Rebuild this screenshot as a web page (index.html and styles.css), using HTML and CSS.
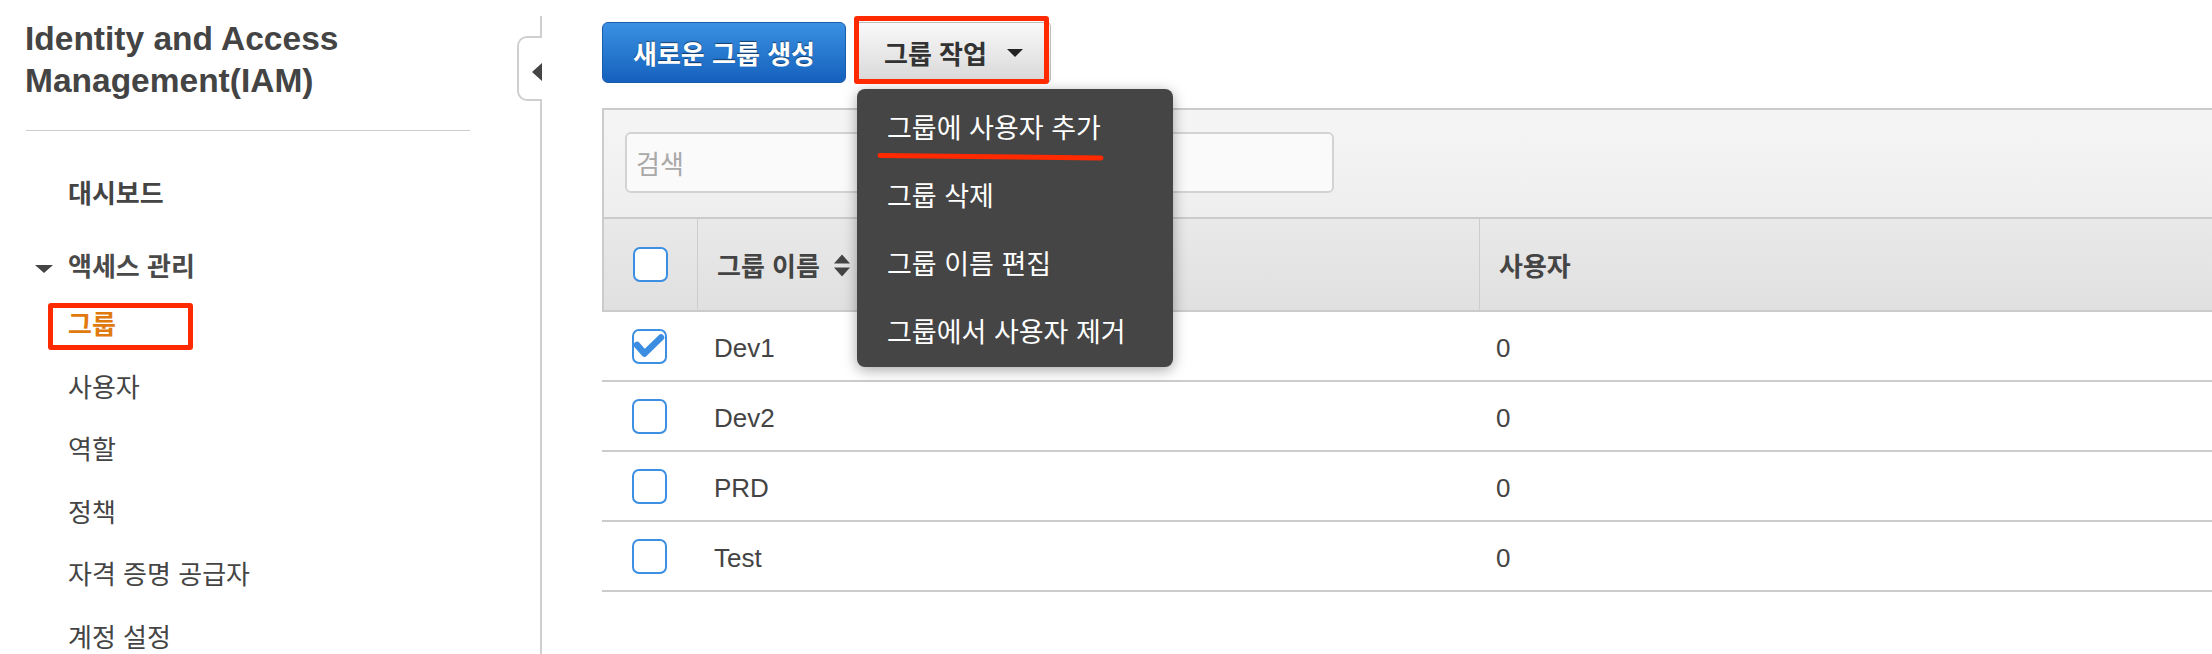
FILE: index.html
```html
<!DOCTYPE html>
<html lang="ko">
<head>
<meta charset="utf-8">
<title>IAM 그룹</title>
<link rel="stylesheet" href="styles.css">
</head>
<body>
<div class="page">
  <aside class="sidebar">
    <h1 class="title">Identity and Access Management(IAM)</h1>
    <hr class="rule">
    <ul class="nav">
      <li class="nav-top">대시보드</li>
      <li class="nav-section"><span class="caret-down"></span>액세스 관리</li>
      <li class="nav-sub active"><span class="mark-box mark-nav"></span>그룹</li>
      <li class="nav-sub">사용자</li>
      <li class="nav-sub">역할</li>
      <li class="nav-sub">정책</li>
      <li class="nav-sub">자격 증명 공급자</li>
      <li class="nav-sub">계정 설정</li>
    </ul>
    <div class="collapse-tab"><span class="tri-left"></span></div>
  </aside>

  <main class="main">
    <div class="toolbar">
      <button class="btn btn-primary">새로운 그룹 생성</button>
      <div class="actions">
        <button class="btn btn-default">그룹 작업<span class="caret"></span></button>
        <span class="mark-box mark-actions"></span>
        <ul class="menu">
          <li>그룹에 사용자 추가
            <svg class="underline" width="230" height="12" viewBox="0 0 230 12"><path d="M4 4.5 Q 110 5.5 225 7" fill="none" stroke="#ff2a00" stroke-width="5" stroke-linecap="round"/></svg>
          </li>
          <li>그룹 삭제</li>
          <li>그룹 이름 편집</li>
          <li>그룹에서 사용자 제거</li>
        </ul>
      </div>
    </div>

    <div class="panel">
      <div class="search-row">
        <input class="search" type="text" placeholder="검색">
      </div>
      <div class="grid-header">
        <div class="cell cb-cell"><span class="checkbox"></span></div>
        <div class="cell hcell">그룹 이름
          <svg class="sort" width="16" height="23" viewBox="0 0 16 23"><polygon points="0,9.5 8,0.5 16,9.5" fill="#444"/><polygon points="0,13.5 16,13.5 8,22.5" fill="#444"/></svg>
        </div>
        <div class="cell hcell">사용자</div>
      </div>
      <div class="row">
        <div class="cell cb-cell"><span class="checkbox checked"><svg width="31" height="31" viewBox="0 0 31 31"><polyline points="3,14 10.5,22.5 27,6.5" fill="none" stroke="#3a8de0" stroke-width="6.5" stroke-linecap="round" stroke-linejoin="round"/></svg></span></div>
        <div class="cell tcell">Dev1</div>
        <div class="cell tcell">0</div>
      </div>
      <div class="row">
        <div class="cell cb-cell"><span class="checkbox"></span></div>
        <div class="cell tcell">Dev2</div>
        <div class="cell tcell">0</div>
      </div>
      <div class="row">
        <div class="cell cb-cell"><span class="checkbox"></span></div>
        <div class="cell tcell">PRD</div>
        <div class="cell tcell">0</div>
      </div>
      <div class="row">
        <div class="cell cb-cell"><span class="checkbox"></span></div>
        <div class="cell tcell">Test</div>
        <div class="cell tcell">0</div>
      </div>
    </div>
  </main>
</div>
</body>
</html>
```
FILE: styles.css
```css
html, body {
  margin: 0;
  padding: 0;
  background: #fff;
}
body {
  font-family: "Noto Sans CJK KR", sans-serif;
  color: #444;
}
.page {
  display: flex;
  height: 654px;
  overflow: hidden;
}

/* ---------- sidebar ---------- */
.sidebar {
  position: relative;
  flex: 0 0 542px;
  box-sizing: border-box;
  margin-top: 16px;
  padding-left: 25px;
  border-right: 2px solid #cfcfcf;
}
.title {
  font-family: "Liberation Sans", Arial, sans-serif;
  font-weight: 700;
  font-size: 33.5px;
  line-height: 42px;
  color: #444;
  margin: 2px 0 0;
  width: 420px;
}
.rule {
  border: 0;
  height: 1px;
  background: #cccccc;
  width: 444px;
  margin: 28px 0 0 1px;
}
.nav {
  list-style: none;
  margin: 30px 0 0;
  padding: 0;
  font-size: 26px;
}
.nav li {
  padding-left: 43px;
  white-space: nowrap;
}
.nav-top {
  line-height: 62px;
  font-weight: 700;
  margin-bottom: 15px;
}
.nav-section {
  line-height: 54px;
  font-weight: 700;
  color: #4a4a4a;
}
.nav-sub {
  position: relative;
  line-height: 62.5px;
}
.nav-sub.active {
  color: #e07a0e;
  font-weight: 700;
}
.caret-down {
  display: inline-block;
  width: 0;
  height: 0;
  border-left: 9px solid transparent;
  border-right: 9px solid transparent;
  border-top: 8px solid #444;
  margin-left: -33px;
  margin-right: 15px;
  vertical-align: middle;
}
.collapse-tab {
  position: absolute;
  top: 20px;
  right: -2px;
  width: 25px;
  height: 65px;
  box-sizing: border-box;
  border: 2px solid #cfcfcf;
  border-right: 0;
  border-radius: 10px 0 0 10px;
  background: #fff;
  display: flex;
  justify-content: flex-end;
  align-items: center;
  padding-top: 7px;
}
.tri-left {
  width: 0;
  height: 0;
  border-top: 9px solid transparent;
  border-bottom: 9px solid transparent;
  border-right: 10px solid #444;
}

/* annotation boxes */
.mark-box {
  position: absolute;
  box-sizing: border-box;
  border: 5px solid #ff2a00;
  border-radius: 3px;
  pointer-events: none;
}
.mark-nav {
  left: 23px;
  top: 10.5px;
  width: 145px;
  height: 47px;
}
.mark-actions {
  left: -2px;
  top: -6px;
  width: 195px;
  height: 68px;
  z-index: 3;
}

/* ---------- main ---------- */
.main {
  flex: 1;
  min-width: 0;
  padding: 22px 0 0 60px;
}
.toolbar {
  display: flex;
  gap: 10px;
}
.btn {
  height: 61px;
  box-sizing: border-box;
  font-family: "Noto Sans CJK KR", sans-serif;
  font-size: 26px;
  font-weight: 700;
  padding: 0;
  margin: 0;
  cursor: pointer;
}
.btn-primary {
  width: 244px;
  color: #fff;
  background: linear-gradient(#3a91e2, #1561bd);
  border: 1px solid #1c5dab;
  border-radius: 6px;
  text-shadow: 0 -1px 1px rgba(0, 0, 0, 0.5);
}
.actions {
  position: relative;
}
.btn-default {
  width: 195px;
  color: #333;
  background: linear-gradient(#f9f9f9, #d8d8d8);
  border: 1px solid #bcbcbc;
  border-radius: 4px;
  display: flex;
  align-items: center;
  padding-left: 27px;
}
.caret {
  width: 0;
  height: 0;
  border-left: 8px solid transparent;
  border-right: 8px solid transparent;
  border-top: 8px solid #222;
  margin-left: 20px;
}
.menu {
  position: absolute;
  left: 1px;
  top: 67px;
  width: 316px;
  height: 278px;
  box-sizing: border-box;
  margin: 0;
  padding: 4px 0 0;
  list-style: none;
  background: #454545;
  border-radius: 8px;
  box-shadow: 0 3px 14px rgba(0, 0, 0, 0.35);
  color: #fff;
  font-size: 27px;
  z-index: 2;
}
.menu li {
  position: relative;
  height: 68px;
  line-height: 68px;
  padding-left: 30px;
  white-space: nowrap;
}
.underline {
  position: absolute;
  left: 19px;
  top: 58px;
}

/* ---------- table panel ---------- */
.panel {
  margin-top: 25px;
}
.search-row {
  border-top: 2px solid #cbcbcb;
  border-left: 2px solid #cbcbcb;
  background: linear-gradient(#f5f5f5, #eeeeee);
  padding: 22px 0 24px 21px;
}
.search {
  display: block;
  width: 709px;
  height: 61px;
  box-sizing: border-box;
  border: 2px solid #d3d3d3;
  border-radius: 6px;
  background: #fafafa;
  font-family: "Noto Sans CJK KR", sans-serif;
  font-size: 26px;
  color: #444;
  padding: 0 0 0 9px;
  outline: none;
}
.search::placeholder {
  color: #a9a9a9;
}
.grid-header {
  display: grid;
  grid-template-columns: 93px 782px 1fr;
  height: 95px;
  box-sizing: border-box;
  border-top: 2px solid #cbcbcb;
  border-bottom: 2px solid #cbcbcb;
  border-left: 2px solid #cbcbcb;
  background: linear-gradient(#e9e9e9, #e0e0e0);
  font-size: 26px;
  font-weight: 700;
  color: #444;
}
.cell {
  display: flex;
  align-items: center;
  min-width: 0;
}
.cb-cell {
  justify-content: center;
}
.hcell {
  border-left: 1px solid #cdcdcd;
  padding-left: 19px;
}
.sort {
  margin-left: 14px;
  margin-top: 1px;
}
.row {
  display: grid;
  grid-template-columns: 95px 782px 1fr;
  height: 70px;
  box-sizing: border-box;
  border-bottom: 2px solid #cccccc;
}
.tcell {
  font-family: "Liberation Sans", Arial, sans-serif;
  font-size: 26px;
  color: #444;
  padding: 4px 0 0 17px;
}
.checkbox {
  display: block;
  width: 35px;
  height: 35px;
  box-sizing: border-box;
  border: 2px solid #3d8fe2;
  border-radius: 7px;
  background: #fff;
}
.checkbox svg {
  display: block;
}
```
